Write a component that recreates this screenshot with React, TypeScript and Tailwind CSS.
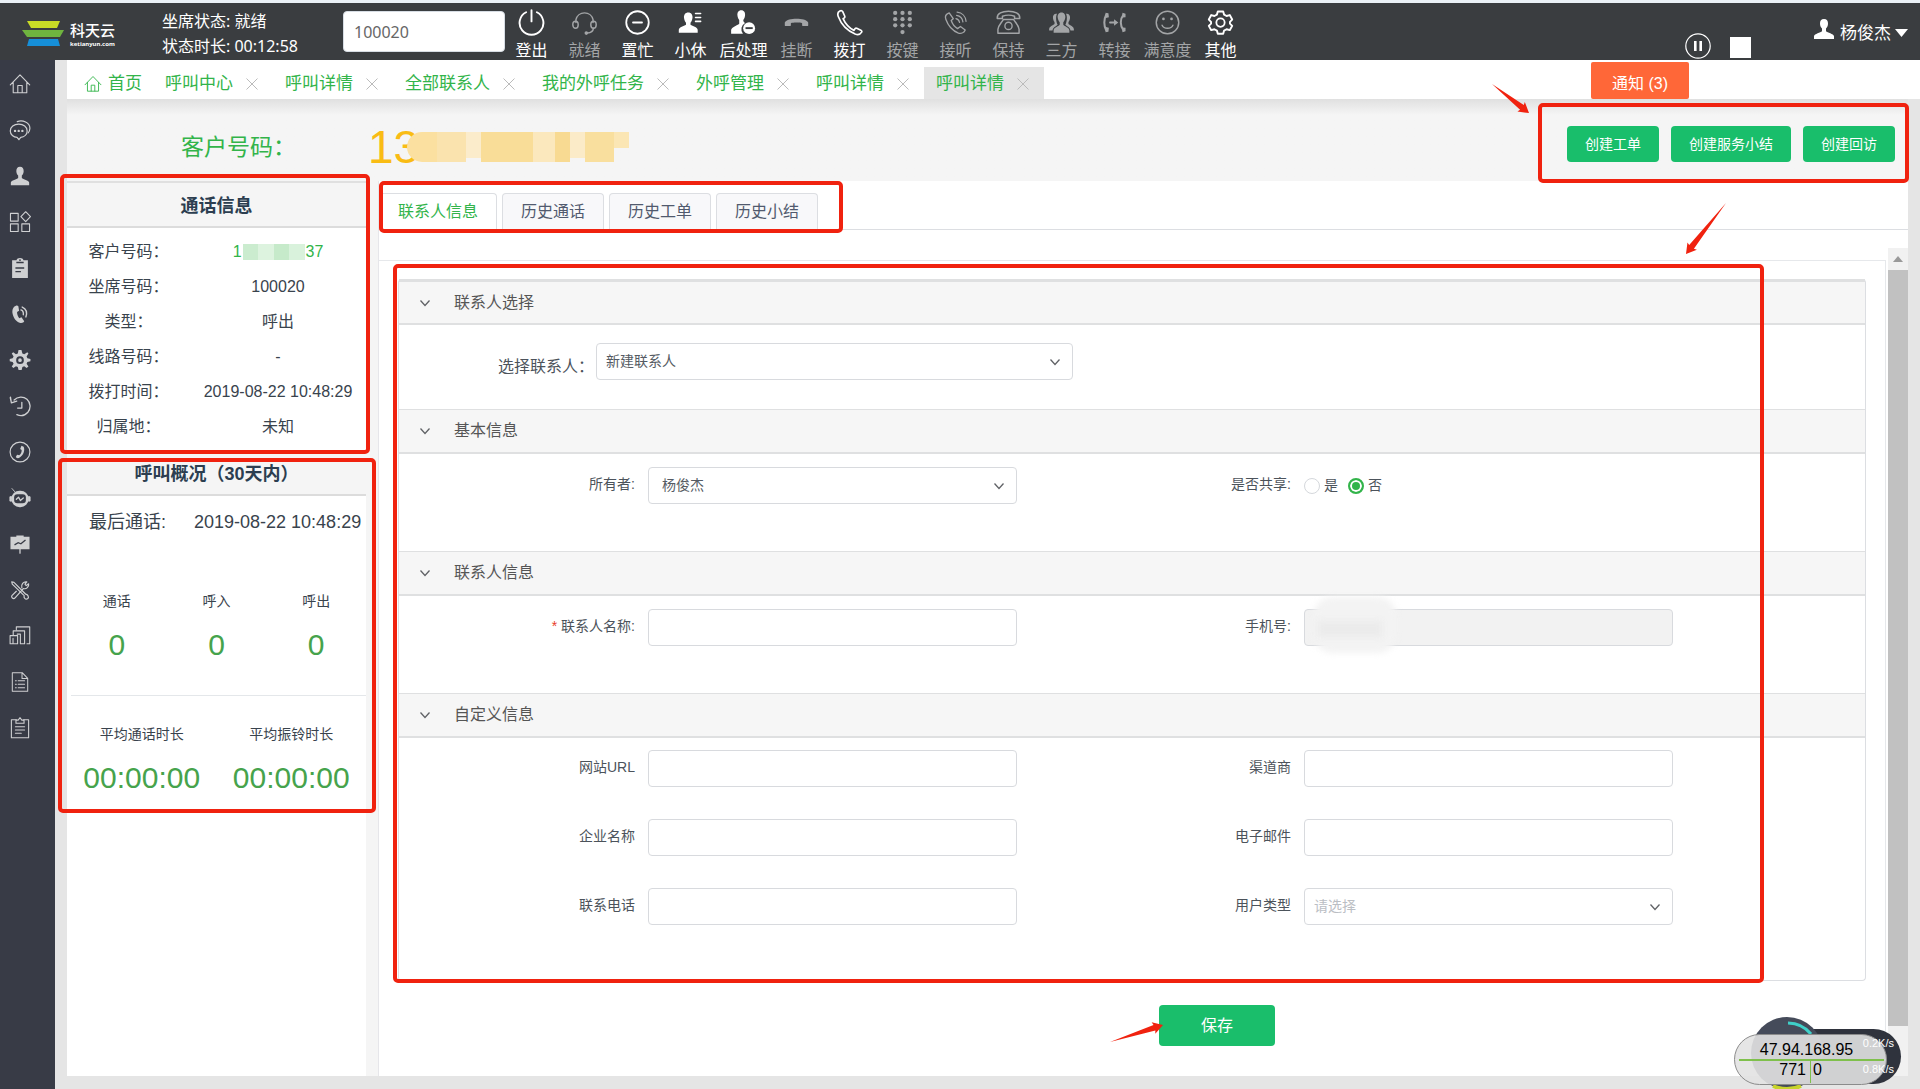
import type { ReactNode } from "react";

const RED = "#f0220f";

/* ---------- icons ---------- */

type IconProps = { name: string; className?: string };

const line = (d: string, w = 1.5) => (
  <path d={d} fill="none" stroke="currentColor" strokeWidth={w} strokeLinecap="round" strokeLinejoin="round" />
);

const THIN_HANDSET =
  "M3.4 1.8C1.6 2.7 1.3 4.7 2 6.6C4.4 13 10 19.2 17 22.2C19 23 21.6 22.6 22.8 20.6C23.2 19.8 22.8 19.2 22.1 18.8L18.4 17.1C17.6 16.8 17 17.1 16.6 17.9L16 19C12 17.1 8.2 12.9 6.3 8.6L7.4 7.9C8 7.4 8 6.9 7.7 6.2L6 2.4C5.6 1.4 4.4 1.3 3.4 1.8Z";
const PERSON =
  "M12 2C9.2 2 7.9 4.1 8 6.7C8.1 8.7 8.8 10.3 10 11.4V14.2C8.6 15.6 2.4 16.6 2 19.2V22H22V19.2C21.6 16.6 15.4 15.6 14 14.2V11.4C15.2 10.3 15.9 8.7 16 6.7C16.1 4.1 14.8 2 12 2Z";

const dots: [number, number][] = [];
for (const y of [3.5, 9, 14.5]) for (const x of [5.5, 12, 18.5]) dots.push([x, y]);
dots.push([12, 20.5]);

const icons: Record<string, ReactNode> = {
  power: line("M12 1V11M7.2 2.9A10.6 10.6 0 1 0 16.8 2.9", 1.7),
  headset: (
    <>
      {line("M4.4 12V9.5A7.8 7.8 0 0 1 19.6 9.5V12M20 17C19.6 20 18 21.2 14.6 21.4", 1.3)}
      <ellipse cx="4" cy="14" rx="2.4" ry="3.1" fill="none" stroke="currentColor" strokeWidth="1.3" />
      <ellipse cx="20" cy="14" rx="2.4" ry="3.1" fill="none" stroke="currentColor" strokeWidth="1.3" />
      <circle cx="13.6" cy="21.4" r="1.6" fill="currentColor" />
    </>
  ),
  busy: (
    <>
      <circle cx="12" cy="12" r="10" fill="none" stroke="currentColor" strokeWidth="1.6" />
      {line("M8 12H16", 1.6)}
    </>
  ),
  rest: (
    <>
      <path d="M10 3C7.4 3 6 5 6.2 7.6C6.4 9.6 7 11.2 8 12.2V14C6 15.4 2 16 1.6 18.4V21H18.4V18.4C18 16 14 15.4 12 14V12.2C13 11.2 13.6 9.6 13.8 7.6C14 5 12.6 3 10 3Z" fill="currentColor" />
      {line("M16.5 4H21M16.5 7.5H21M16.5 11H21", 1.4)}
    </>
  ),
  after: (
    <>
      <path d="M10 1C7.4 1 6.4 3.2 6.6 5.6C6.8 7.4 7.3 8.8 8.2 9.8V13C6.4 14.6 1.4 16 1 18.6V22H11.5A6.4 6.4 0 0 1 13.4 12.4C12.4 12 11.8 11 11.8 9.8C12.7 8.8 13.2 7.4 13.4 5.6C13.6 3.2 12.6 1 10 1Z" fill="currentColor" />
      <circle cx="17" cy="17" r="5.3" fill="currentColor" />
      <path d="M13.8 17H20.2" stroke="#3a3d40" strokeWidth="1.7" />
    </>
  ),
  hangup: (
    <path d="M1.6 14.4V12C3 9.4 7.4 8.6 12 8.6S21 9.4 22.4 12V14.4C22.4 15 22 15.2 21.4 15.2H17.8C17.2 15.2 17 14.8 17 14.2V12.6C15.4 11.9 8.6 11.9 7 12.6V14.2C7 14.8 6.8 15.2 6.2 15.2H2.6C2 15.2 1.6 15 1.6 14.4Z" fill="currentColor" />
  ),
  dial: line(THIN_HANDSET, 1.5),
  keys: (
    <>
      {dots.map(([x, y]) => (
        <circle key={`${x}-${y}`} cx={x} cy={y} r="1.9" fill="currentColor" />
      ))}
    </>
  ),
  answer: (
    <>
      {line("M6.4 3.4C3.6 4.4 2.4 6.4 3.4 9.2C5.4 14.8 9.6 19.6 14.6 21.4C17.4 22.2 19.8 20.8 20.6 18.6L16.4 15.6L13.8 17.4C11.2 15.8 9.2 13.2 8.2 10.2L10 8.6Z", 1.2)}
      {line("M12.4 8.6C14.2 9 15.3 10.2 15.6 12M13 5.6C16.4 6.2 18.2 8.4 18.6 11.4M13.4 2.8C18 3.2 21 6.6 21.4 11", 1.1)}
    </>
  ),
  hold: (
    <>
      {line("M2 8.4C1.6 3.8 6.6 2 12 2S22.4 3.8 22 8.4H17.4V6.4C14.6 5.4 9.4 5.4 6.6 6.4V8.4ZM7.4 9.4C5.6 12.4 3 14.6 2.6 18V21.6H21.4V18C21 14.6 18.4 12.4 16.6 9.4Z", 1.3)}
      <circle cx="12" cy="15" r="3.2" fill="none" stroke="currentColor" strokeWidth="1.2" />
    </>
  ),
  trio: (
    <>
      <path d="M12 3C9.6 3 8.4 5 8.6 7.4C8.8 9.2 9.4 10.8 10.4 11.8V14C9 15.6 5.2 16.4 5 19V21H19V19C18.8 16.4 15 15.6 13.6 14V11.8C14.6 10.8 15.2 9.2 15.4 7.4C15.6 5 14.4 3 12 3Z" fill="currentColor" />
      <path d="M8 4.2C5.6 3.8 4.2 5.4 4.4 7.8C4.6 9.4 5 10.6 5.8 11.6V13.4C4.4 14.8 1.2 15.4 1 18V19.2H4C4.4 16.4 7 15.4 8.6 14C7.2 11.6 6.6 6.6 8 4.2ZM16 4.2C18.4 3.8 19.8 5.4 19.6 7.8C19.4 9.4 19 10.6 18.2 11.6V13.4C19.6 14.8 22.8 15.4 23 18V19.2H20C19.6 16.4 17 15.4 15.4 14C16.8 11.6 17.4 6.6 16 4.2Z" fill="currentColor" />
    </>
  ),
  transfer: (
    <>
      {line("M4.6 5C2.4 9 2.4 15 4.600 19M20 5C16.800 9 16.800 15 20 19", 1.8)}
      <path d="M4 3.400L6.600 3.800L7 7.400L4.400 8ZM4 20.600L6.600 20.200L7 16.600L4.400 16ZM19 3.400L21.800 4.200L21.800 7.400L19 7.600ZM19 20.600L21.800 19.800L21.800 16.600L19 16.400Z" fill="currentColor" />
      {line("M8 12H12.500", 1.6)}
      <path d="M11.6 9.2L15.400 12L11.600 14.800Z" fill="currentColor" />
    </>
  ),
  smile: (
    <>
      <circle cx="12" cy="12" r="10" fill="none" stroke="currentColor" strokeWidth="1.3" />
      {line("M7.2 14.4C8.8 18 15.2 18 16.8 14.4", 1.3)}
      <circle cx="8.4" cy="8.8" r="1.2" fill="currentColor" />
      <circle cx="15.6" cy="8.8" r="1.2" fill="currentColor" />
    </>
  ),
  gearLine: (
    <>
      {line("M9.6 2.2H14.4L15.2 5L17.4 6.2L20.2 5.4L22.4 9.4L20.4 11.4V13L22.4 15L20.2 18.8L17.4 18L15.2 19.2L14.4 22H9.6L8.8 19.2L6.6 18L3.8 18.8L1.6 15L3.6 13V11.4L1.6 9.4L3.8 5.4L6.6 6.2L8.8 5Z", 1.7)}
      <circle cx="12" cy="12.1" r="3.7" fill="none" stroke="currentColor" strokeWidth="1.6" />
    </>
  ),
  home: line("M1.4 13L12 2L22.6 13M4.6 10V21.6H19.4V10M9.6 21.4V13.6H14.4V21.4", 1.2),
  chat: (
    <>
      {line("M10.6 5.6C5.4 5.6 1.4 8.8 1.4 13C1.4 17 5 19.8 8.8 20L10.8 22.6L12.8 20C16.6 19.6 19.8 17 19.8 13C19.8 8.8 15.8 5.6 10.6 5.6Z", 1.3)}
      {line("M9 2.8C15 .8 22.6 3.6 22.8 10C22.8 12.4 22 14 20.8 15.2", 1.3)}
      <circle cx="6.6" cy="13" r="1.3" fill="currentColor" />
      <circle cx="10.6" cy="13" r="1.3" fill="currentColor" />
      <circle cx="14.6" cy="13" r="1.3" fill="currentColor" />
    </>
  ),
  person: <path d={PERSON} fill="currentColor" />,
  apps: line("M1.6 2.6H10V11H1.6ZM1.6 14H10V22.4H1.6ZM14 14H22.4V22.4H14ZM18.2 .8L23.4 6.2L18.2 11.6L13 6.2Z", 1.2),
  clipboard: (
    <>
      <path d="M3.4 3.6H8.2C8.6 1.8 10 1 12 1S15.4 1.8 15.8 3.6H20.6V23H3.4Z" fill="currentColor" />
      <path d="M8 6H16M7 12H16.6M7 16H13" stroke="#383b46" strokeWidth="1.5" />
      <circle cx="12" cy="3.4" r="1" fill="#383b46" />
    </>
  ),
  call: (
    <>
      <path d="M7.6 3C4.6 4 3 7.6 4 12C5 16.6 8 20.6 12.4 21.8C14.4 22.2 16 21.4 16.6 20L13.6 15.6L11.2 16.6C9.6 14.6 8.8 12.2 8.8 9.8L11 8.4L10.2 3.6C9.6 2.8 8.6 2.6 7.6 3Z" fill="currentColor" />
      {line("M13 7.6C15 8.4 16 10.4 15.6 12.8M14.4 4.4C18.6 6.2 20 10.4 18.4 15.2", 1.5)}
    </>
  ),
  gear: (
    <path
      fillRule="evenodd"
      fill="currentColor"
      d="M10.4 1H13.6L14.6 5L16.6 5.6L20 3.6L21.200 5L19.2 8.200L20 10L23.4 10.8V13.4L20 14.2L19.2 16L21.200 19.200L19.200 20.800L16.6 18.8L14.6 19.600L13.800 23H10.4L9.6 19.600L7.6 18.8L4.800 20.800L3 19.200L5 16L4 14.2L.8 13.4V10.8L4 10L5 8.200L3 5L4.600 3.600L7.6 5.600L9.600 5ZM12 8A4.200 4.200 0 1 0 12 16.400A4.200 4.200 0 1 0 12 8ZM12 10.200A2 2 0 1 1 12 14.200A2 2 0 1 1 12 10.200Z"
    />
  ),
  history: line("M1.6 2.4L2.6 8.6L8.4 6.6M2.6 8.4L1.4 3M5.6 5.4C9.4 1.4 15.6 1.2 19.6 4.6C23.8 8.4 24 14.6 20.6 18.8C17.4 22.4 12.6 23.2 8.6 21.4M14 8V14.2H9.4", 1.4),
  phoneRing: (
    <>
      <circle cx="12" cy="12" r="10.8" fill="none" stroke="currentColor" strokeWidth="1.3" />
      <path d="M13.6 5.2L16 6.4C17.8 10.4 15.6 16.4 10.8 18.6C9.6 19 8.2 18.6 7.4 17.4L8.8 15L11.2 15.6C13 14.2 14 12 13.8 9.8L12.2 8.6Z" fill="currentColor" />
    </>
  ),
  bot: (
    <>
      <rect x="2.6" y="4" width="18.8" height="18" rx="9" fill="currentColor" />
      <rect x="5.6" y="8" width="12.8" height="9.600" rx="3.500" fill="#383b46" />
      <path d="M1 10.6H3V15.4H1ZM21 10.6H23V15.4H21ZM3 1.4L4.400 3L6.600 5.4" fill="currentColor" stroke="currentColor" />
      {line("M8 13.4L10.4 11L12.4 14.8L15.6 12", 1.4)}
    </>
  ),
  board: (
    <>
      <path d="M8 2.600H16V4H22.4V17.6H1.6V4H8Z" fill="currentColor" />
      <path d="M6 13L10 10.6L13 11.8L18 7.6" fill="none" stroke="#383b46" strokeWidth="1.4" />
      {line("M12 17V22", 1.4)}
    </>
  ),
  tools: (
    <>
      {line("M3 3L5.4 3.6L18 16.4M3 3L3.6 5.6L16.6 18.2M16.6 18.2C15.6 20.4 18 22.8 20.2 21.6S20.6 16.4 18 16.4", 1.3)}
      {line("M14 9.6C13 6 15.6 2.6 19.4 3.2L17.4 5.6L18.8 7.2L21.4 5.2C22 8.6 19 11.4 15.6 10.4L6.6 20.6C4.8 22.6 1.6 19.8 3.4 17.8L8 13.4", 1.3)}
    </>
  ),
  stack: line("M8 5V2H22.6V20.4H19.6M4.6 11V6.4H17V20.4H13M1.2 11.6H9.4V20.4H1.2ZM12.4 20.4V10H9M4.4 20V14.6", 1.2),
  doc: line("M3.6 1.8H14.4L20.4 8V22.2H3.6ZM14.2 2V8.2H20M7 10.6H8M10 10.6H17M7 14.4H8M10 14.4H17M7 18.2H8M10 18.2H17", 1.1),
  notes: (
    <>
      {line("M8 3H2.6V22.6H21.4V3H16M7 10.6H17M7 14.2H17M7 17.8H13.4", 1.2)}
      <path d="M7.6 6.8V3.4H10L12 .8L14 3.4H16.4V6.8Z" fill="none" stroke="currentColor" strokeWidth="1.2" />
    </>
  ),
};

function Icon({ name, className }: IconProps) {
  return (
    <svg viewBox="0 0 24 24" className={className} aria-hidden="true">
      {icons[name]}
    </svg>
  );
}

function Chevron({ className }: { className?: string }) {
  return (
    <svg viewBox="0 0 12 12" className={className} aria-hidden="true">
      <path d="M1.5 3.5L6 8.5L10.5 3.5" fill="none" stroke="#606266" strokeWidth="1.3" />
    </svg>
  );
}

/* ---------- header ---------- */

const toolbar: { icon: string; label: string; on?: boolean }[] = [
  { icon: "power", label: "登出", on: true },
  { icon: "headset", label: "就绪" },
  { icon: "busy", label: "置忙", on: true },
  { icon: "rest", label: "小休", on: true },
  { icon: "after", label: "后处理", on: true },
  { icon: "hangup", label: "挂断" },
  { icon: "dial", label: "拨打", on: true },
  { icon: "keys", label: "按键" },
  { icon: "answer", label: "接听" },
  { icon: "hold", label: "保持" },
  { icon: "trio", label: "三方" },
  { icon: "transfer", label: "转接" },
  { icon: "smile", label: "满意度" },
  { icon: "gearLine", label: "其他", on: true },
];

function Header() {
  return (
    <header className="flex h-[60px] border-t-[3px] border-[#eaf1f6] bg-[#3a3d40] pl-[22px] pr-3 font-['Noto_Sans','Noto_Sans_CJK_SC',sans-serif] text-white">
      <div className="flex w-[140px] shrink-0 items-start gap-[6px] pt-[17px]">
        <svg viewBox="0 0 42 27" className="h-[27px] w-[42px]" aria-hidden="true">
          <path d="M5 1H38L35 8H9Z" fill="#c9dc26" />
          <path d="M0 10H42L38 17H5Z" fill="#6fb43f" />
          <path d="M7 19H36L38 26H5Z" fill="#168fd8" />
        </svg>
        <div className="flex flex-col">
          <span className="text-[15px] font-medium leading-[20px]">科天云</span>
          <span className="text-[6px] font-bold leading-[8px]">ketianyun.com</span>
        </div>
      </div>
      <div className="w-[181px] shrink-0 pt-[6px] text-[16px] leading-[25px]">
        <p>坐席状态: 就绪</p>
        <p>状态时长: 00:12:58</p>
      </div>
      <input
        aria-label="拨打号码"
        defaultValue="100020"
        className="mt-2 h-[41px] w-[162px] shrink-0 rounded border border-[#d7dde4] bg-white px-[10px] text-[16px] text-[#666] outline-none"
      />
      <nav className="flex">
        {toolbar.map((t) => (
          <button
            key={t.label}
            type="button"
            className={`flex w-[53px] flex-col items-center pt-[6px] ${t.on ? "text-white" : "text-[#a3a5a7]"}`}
          >
            <Icon name={t.icon} className="size-[27px]" />
            <span className="mt-1 whitespace-nowrap text-[16px] leading-5">{t.label}</span>
          </button>
        ))}
      </nav>
      <div className="ml-auto flex items-start">
        <button type="button" aria-label="暂停" className="mt-[30px]">
          <svg viewBox="0 0 26 26" className="size-[26px]">
            <circle cx="13" cy="13" r="12.2" fill="none" stroke="#fff" strokeWidth="1.2" />
            <path d="M9 8H11.6V18H9ZM14.4 8H17V18H14.400Z" fill="#fff" />
          </svg>
        </button>
        <button type="button" aria-label="停止" className="ml-[19px] mt-[34px] size-[21px] bg-white" />
        <button type="button" className="ml-[61px] mt-[14px] flex items-start">
          <Icon name="person" className="size-[24px]" />
          <span className="ml-1 mt-1 text-[17px] leading-6">杨俊杰</span>
          <svg viewBox="0 0 13 8" className="ml-1 mt-3 h-2 w-[13px]" aria-hidden="true">
            <path d="M0 0H13L6.5 8Z" fill="#fff" />
          </svg>
        </button>
      </div>
    </header>
  );
}

const sideIcons: [string, string][] = [
  ["home", "首页"],
  ["chat", "会话"],
  ["person", "客户"],
  ["apps", "应用"],
  ["clipboard", "工单"],
  ["call", "呼叫"],
  ["gear", "设置"],
  ["history", "历史"],
  ["phoneRing", "通话"],
  ["bot", "机器人"],
  ["board", "报表"],
  ["tools", "工具"],
  ["stack", "统计"],
  ["doc", "文档"],
  ["notes", "记录"],
];

function Sidebar() {
  return (
    <aside className="flex w-[55px] shrink-0 flex-col bg-[#383b46] pt-px text-[#cfd0d2]">
      {sideIcons.map(([icon, label]) => (
        <a key={icon} href="#" aria-label={label} className="flex h-[46px] items-center pl-[9px]">
          <Icon name={icon} className="size-[22px]" />
        </a>
      ))}
    </aside>
  );
}

const pageTabs = ["呼叫中心", "呼叫详情", "全部联系人", "我的外呼任务", "外呼管理", "呼叫详情", "呼叫详情"];

function PageTabs() {
  return (
    <div className="flex h-[39px] items-end bg-white text-[17px] leading-8 text-[#32b44a]">
      <a href="#" className="flex h-8 w-[86px] items-center gap-[6px] whitespace-nowrap pl-[17px] pt-[2px]">
        <Icon name="home" className="size-[18px]" />
        首页
      </a>
      {pageTabs.map((t, i) => (
        <div
          key={i}
          className={`flex h-8 shrink-0 items-center gap-[13px] whitespace-nowrap pl-3 pr-[15px] pt-[2px] ${i === 6 ? "bg-[#e5e5e5]" : ""}`}
        >
          <a href="#">{t}</a>
          <button type="button" aria-label={`关闭${t}`}>
            <svg viewBox="0 0 12 12" className="size-3">
              <path d="M.5 .5L11.5 11.5M11.5 .5L.5 11.5" stroke="#bbb" strokeWidth="1" />
            </svg>
          </button>
        </div>
      ))}
      <button
        type="button"
        className="ml-auto mr-[231px] h-[37px] w-[98px] shrink-0 rounded-xs bg-[#ff6738] pt-[6px] text-[16px] leading-6 text-white"
      >
        通知 (3)
      </button>
    </div>
  );
}

/* ---------- shared pieces ---------- */

function Frame({ className }: { className: string }) {
  return <div className={`pointer-events-none absolute z-10 rounded-[5px] border-4 border-[#f0220f] ${className}`} />;
}

function Arrow({ className, x1, y1, x2, y2 }: { className: string; x1: number; y1: number; x2: number; y2: number }) {
  const len = Math.hypot(x2 - x1, y2 - y1);
  const ux = (x2 - x1) / len;
  const uy = (y2 - y1) / len;
  const at = (back: number, side: number) => `${x2 - ux * back - uy * side},${y2 - uy * back + ux * side}`;
  return (
    <svg viewBox="0 0 60 60" className={`pointer-events-none absolute z-10 size-[60px] ${className}`} aria-hidden="true">
      <polygon points={`${x1},${y1} ${at(9, 3)} ${at(10, 6)} ${x2},${y2} ${at(10, -6)} ${at(9, -3)}`} fill={RED} />
    </svg>
  );
}

/* ---------- left column ---------- */

const callInfo: [string, string][] = [
  ["客户号码：", ""],
  ["坐席号码：", "100020"],
  ["类型：", "呼出"],
  ["线路号码：", "-"],
  ["拨打时间：", "2019-08-22 10:48:29"],
  ["归属地：", "未知"],
];

function CardTitle({ children }: { children: ReactNode }) {
  return (
    <h2 className="border-b-2 border-[#dcdcdc] bg-[#f5f5f5] text-center text-[18px] font-bold leading-[40px] text-[#2c3e50]">
      {children}
    </h2>
  );
}

function LeftColumn() {
  return (
    <div className="flex w-[312px] shrink-0 flex-col border-r border-[#e6e6ea] bg-[#f5f5f5] pr-3">
      <section className="relative h-[273px] bg-white text-[16px] text-[#39434d]">
        <Frame className="-left-[7px] -right-1 -top-[7px] bottom-0" />
        <div className="border-t-2 border-[#e0e0e0] bg-[#f5f5f5] pt-[3px]">
          <CardTitle>通话信息</CardTitle>
        </div>
        <dl className="grid grid-cols-[123px_1fr] pt-[6px] text-center leading-[35px]">
          {callInfo.map(([k, v]) => (
            <div key={k} className="contents">
              <dt>{k}</dt>
              <dd>
                {v || (
                  <span className="flex items-center justify-center text-[#32b44a]">
                    1
                    <span className="mx-px flex h-4 w-[62px]">
                      <i className="flex-1 bg-[#cbeccf]" />
                      <i className="flex-1 bg-[#ddf3df]" />
                      <i className="flex-1 bg-[#c6eaca]" />
                      <i className="flex-1 bg-[#d9f2dc]" />
                    </span>
                    37
                  </span>
                )}
              </dd>
            </div>
          ))}
        </dl>
      </section>

      <section className="relative bg-white pb-[13px] text-[#39434d]">
        <Frame className="-left-[9px] -right-[10px] bottom-0 top-1" />
        <CardTitle>呼叫概况（30天内）</CardTitle>
        <p className="flex gap-[28px] whitespace-nowrap pl-[22px] pt-[8px] text-[18px] leading-[36px]">
          <span>最后通话:</span>
          <span>2019-08-22 10:48:29</span>
        </p>
        <div className="grid grid-cols-3 pt-[49px] text-center">
          {["通话", "呼入", "呼出"].map((t) => (
            <div key={t}>
              <p className="text-[14px] leading-[24px]">{t}</p>
              <p className="pt-[10px] text-[30px] leading-[44px] text-[#46a34c]">0</p>
            </div>
          ))}
        </div>
        <div className="ml-1 mt-[28px] border-t border-[#e4e7ea]" />
        <div className="grid grid-cols-2 pt-[26px] text-center">
          {["平均通话时长", "平均振铃时长"].map((t) => (
            <div key={t}>
              <p className="text-[14px] leading-[24px]">{t}</p>
              <p className="pt-[10px] text-[30px] leading-[44px] text-[#46a34c]">00:00:00</p>
            </div>
          ))}
        </div>
      </section>
      <div className="flex-1 bg-white" />
    </div>
  );
}

/* ---------- form ---------- */

const control =
  "h-[37px] w-full appearance-none rounded border border-[#d8dade] bg-white text-[14px] text-[#555b63] outline-none disabled:bg-[#f2f2f2] disabled:opacity-100";

function Field({ id, label, required, children }: { id: string; label: string; required?: boolean; children?: ReactNode }) {
  return (
    <div className="flex items-start pr-[38px]">
      <label htmlFor={id} className="w-[236px] shrink-0 text-right text-[14px] leading-[35px] text-[#4c535b]">
        {required && <span className="mr-1 text-[#e8402c]">*</span>}
        {label}
      </label>
      <div className="relative ml-[13px] flex-1">{children ?? <input id={id} className={`${control} px-[10px]`} />}</div>
    </div>
  );
}

function Select({ id, options, className }: { id: string; options: string[]; className: string }) {
  return (
    <>
      <select id={id} className={`${control} ${className}`}>
        {options.map((o) => (
          <option key={o}>{o}</option>
        ))}
      </select>
      <Chevron className="pointer-events-none absolute right-3 top-[13px] size-3" />
    </>
  );
}

function Section({ title, first, children }: { title: string; first?: boolean; children: ReactNode }) {
  return (
    <section>
      <h3
        className={`flex items-center gap-[23px] border-b-2 border-[#dfe0e1] bg-[#f6f6f6] pl-[20px] text-[16px] leading-6 text-[#555] ${first ? "h-[46px] border-t-[3px] pt-px" : "h-[45px] border-t"}`}
      >
        <Chevron className="size-3" />
        {title}
      </h3>
      {children}
    </section>
  );
}

function Radio({ label, checked }: { label: string; checked?: boolean }) {
  return (
    <label className="flex items-center gap-1 text-[14px] text-[#4c535b]">
      <input
        type="radio"
        name="shared"
        defaultChecked={checked}
        className="size-4 appearance-none rounded-full border border-[#d5d8dc] bg-white checked:border-2 checked:border-[#32b44a] checked:bg-[#32b44a] checked:shadow-[inset_0_0_0_2px_white]"
      />
      {label}
    </label>
  );
}

function ContactForm() {
  return (
    <form className="flex flex-col px-[19px] pb-[29px] pt-[18px]" onSubmit={(e) => e.preventDefault()}>
      <div className="relative rounded-sm border border-t-0 border-[#dcdee2]">
        <Frame className="-bottom-[3px] -left-[6px] -top-[15px] right-[101px]" />
        <Section title="联系人选择" first>
          <div className="flex h-[84px] pl-[99px] pt-[18px]">
            <label htmlFor="contact" className="w-[98px] shrink-0 whitespace-nowrap pt-[6px] text-[16px] leading-9 text-[#4c535b]">
              选择联系人：
            </label>
            <div className="relative w-[477px]">
              <Select id="contact" options={["新建联系人"]} className="px-[9px]" />
            </div>
          </div>
        </Section>
        <Section title="基本信息">
          <div className="grid h-[97px] grid-cols-2 pr-[154px] pt-[13px]">
            <Field id="owner" label="所有者:">
              <Select id="owner" options={["杨俊杰"]} className="px-[13px]" />
            </Field>
            <Field id="shared" label="是否共享:">
              <div id="shared" role="radiogroup" aria-label="是否共享" className="flex h-[37px] items-center gap-[10px]">
                <Radio label="是" />
                <Radio label="否" checked />
              </div>
            </Field>
          </div>
        </Section>
        <Section title="联系人信息">
          <div className="grid h-[97px] grid-cols-2 pr-[154px] pt-[13px]">
            <Field id="name" label="联系人名称:" required />
            <Field id="mobile" label="手机号:">
              <input id="mobile" disabled className={`${control} px-[10px]`} />
              <i className="absolute -top-[12px] left-[9px] h-[56px] w-[84px] rounded-[20px] bg-[#f3f3f3] blur-[3px]" />
              <i className="absolute left-[14px] top-[12px] h-[16px] w-[64px] bg-[#ebebeb] blur-[3px]" />
            </Field>
          </div>
        </Section>
        <Section title="自定义信息">
          <div className="grid grid-cols-2 gap-y-[32px] pb-[55px] pr-[154px] pt-[12px]">
            <Field id="url" label="网站URL" />
            <Field id="channel" label="渠道商" />
            <Field id="company" label="企业名称" />
            <Field id="email" label="电子邮件" />
            <Field id="phone" label="联系电话" />
            <Field id="userType" label="用户类型">
              <Select id="userType" options={["请选择"]} className="px-[9px] text-[#bbbec4]!" />
            </Field>
          </div>
        </Section>
      </div>
      <div className="mt-[24px] flex justify-center pl-[170px]">
        <div className="relative">
          <button type="submit" className="h-[41px] w-[116px] rounded bg-[#1abe6b] text-[16px] text-white">
            保存
          </button>
          <Arrow className="-left-[52px] -top-[10px]" x1={3} y1={47} x2={56} y2={30} />
        </div>
      </div>
    </form>
  );
}

const contentTabs = ["联系人信息", "历史通话", "历史工单", "历史小结"];

function MainColumn() {
  return (
    <div className="flex min-w-0 flex-1 flex-col bg-white">
      <div className="relative flex gap-[5px] border-b border-[#dcdee2] pt-3">
        <Frame className="-bottom-[4px] left-0 top-0 w-[464px]" />
        {contentTabs.map((t, i) => (
          <button
            key={t}
            type="button"
            className={`h-[36px] rounded-t border border-b-0 border-[#dcdee2] px-[18px] text-[16px] ${i === 0 ? "bg-white text-[#32b44a]" : "bg-[#f8f8fa] text-[#515a6e]"}`}
          >
            {t}
          </button>
        ))}
        <Arrow className="right-[175px] top-[16px]" x1={53} y1={6} x2={13} y2={57} />
      </div>
      <div className="mt-[18px] flex flex-1 gap-[2px]">
        <div className="mt-3 min-w-0 flex-1 border-r border-t border-[#e6e8eb]">
          <ContactForm />
        </div>
        <div className="flex w-5 flex-col bg-[#f1f1f1]">
          <div className="flex h-[22px] items-center justify-center">
            <svg viewBox="0 0 10 6" className="h-[6px] w-[10px]" aria-hidden="true">
              <path d="M0 6H10L5 0Z" fill="#999" />
            </svg>
          </div>
          <div className="flex-1 bg-[#c1c1c1]" />
          <div className="h-[50px]" />
        </div>
      </div>
    </div>
  );
}

function CustomerBar() {
  return (
    <div className="relative flex h-[82px] items-center bg-linear-to-b from-[#e0e0e0] to-[#f5f5f5] to-[16px]">
      <div className="flex items-center pt-[14px]">
        <span className="ml-[114px] w-[187px] whitespace-nowrap text-[23px] leading-[60px] text-[#32b44a]">客户号码：</span>
        <span className="text-[46px] leading-[60px] text-[#f9bc14]">13</span>
        <span className="-ml-[12px] flex h-[30px] w-[222px] items-start">
          <i className="h-full flex-[4] rounded-l-full bg-[#fbe0a0]" />
          <i className="h-full flex-[4] bg-[#fae3ae]" />
          <i className="h-[26px] flex-[2] bg-[#fbeccb]" />
          <i className="h-full flex-[7] bg-[#f9dd98]" />
          <i className="h-full flex-[3] bg-[#fbe8bd]" />
          <i className="h-full flex-[2] bg-[#f8da92]" />
          <i className="h-[26px] flex-[2] bg-[#fbebc8]" />
          <i className="h-full flex-[4] bg-[#f9df9e]" />
          <i className="h-[16px] flex-[2] bg-[#fbe6b4]" />
        </span>
      </div>
      <div className="ml-auto mr-[13px] mt-[8px] flex gap-[12px]">
        {["创建工单", "创建服务小结", "创建回访"].map((t) => (
          <button key={t} type="button" className="h-9 rounded bg-[#19be6b] px-[18px] text-[14px] text-white">
            {t}
          </button>
        ))}
      </div>
      <Frame className="-bottom-[2px] -right-px top-1 w-[371px]" />
      <Arrow className="-top-[25px] right-[370px]" x1={14} y1={10} x2={51} y2={39} />
    </div>
  );
}

/* Floating network monitor in the corner of the desktop. */
function NetWidget() {
  return (
    <div className="absolute bottom-0 right-[18px] z-20 h-[72px] w-[168px] overflow-hidden text-black">
      <div className="absolute left-[20px] top-[12px] h-[55px] w-[147px] rounded-full bg-[#2f333d]" />
      <svg viewBox="0 0 72 72" className="absolute left-[17px] top-0 size-[72px]" aria-hidden="true">
        <circle cx="36" cy="36" r="36" fill="#454b5a" />
        <path d="M37 6A30 30 0 0 1 60 17" fill="none" stroke="#3fd0c9" strokeWidth="3" />
        <path d="M22 69A36 36 0 0 0 50 69" fill="none" stroke="#c8d42c" strokeWidth="4" />
      </svg>
      <div className="absolute left-0 top-[17px] h-[51px] w-[153px] rounded-full border border-[#8b8b8b] bg-[#e2e2e2]/90" />
      <div className="absolute right-2 top-[18px] flex flex-col gap-[10px] text-[11px] leading-[16px] text-white">
        <span>0.2K/s</span>
        <span>0.8K/s</span>
      </div>
      <div className="absolute left-[5px] top-[24px] w-[145px] text-[16px] leading-[18px]">
        <p className="border-b-2 border-[#7fc04c] pr-[10px] text-center">47.94.168.95</p>
        <p className="flex">
          <span className="w-[72px] border-r border-[#7fc04c] pb-1 pr-1 text-right">771</span>
          <span className="pl-[2px]">0</span>
        </p>
      </div>
    </div>
  );
}

export default function App() {
  return (
    <div className="relative flex min-h-screen flex-col overflow-hidden bg-[#e5e5e5] font-['Liberation_Sans','Noto_Sans_CJK_SC',sans-serif]">
      <Header />
      <div className="flex flex-1">
        <Sidebar />
        <main className="flex min-w-0 flex-1 flex-col bg-[#e5e5e5] pl-3">
          <PageTabs />
          <div className="flex flex-1 flex-col pb-[13px] pr-3">
            <CustomerBar />
            <div className="flex flex-1">
              <LeftColumn />
              <MainColumn />
            </div>
          </div>
        </main>
      </div>
      <NetWidget />
    </div>
  );
}
